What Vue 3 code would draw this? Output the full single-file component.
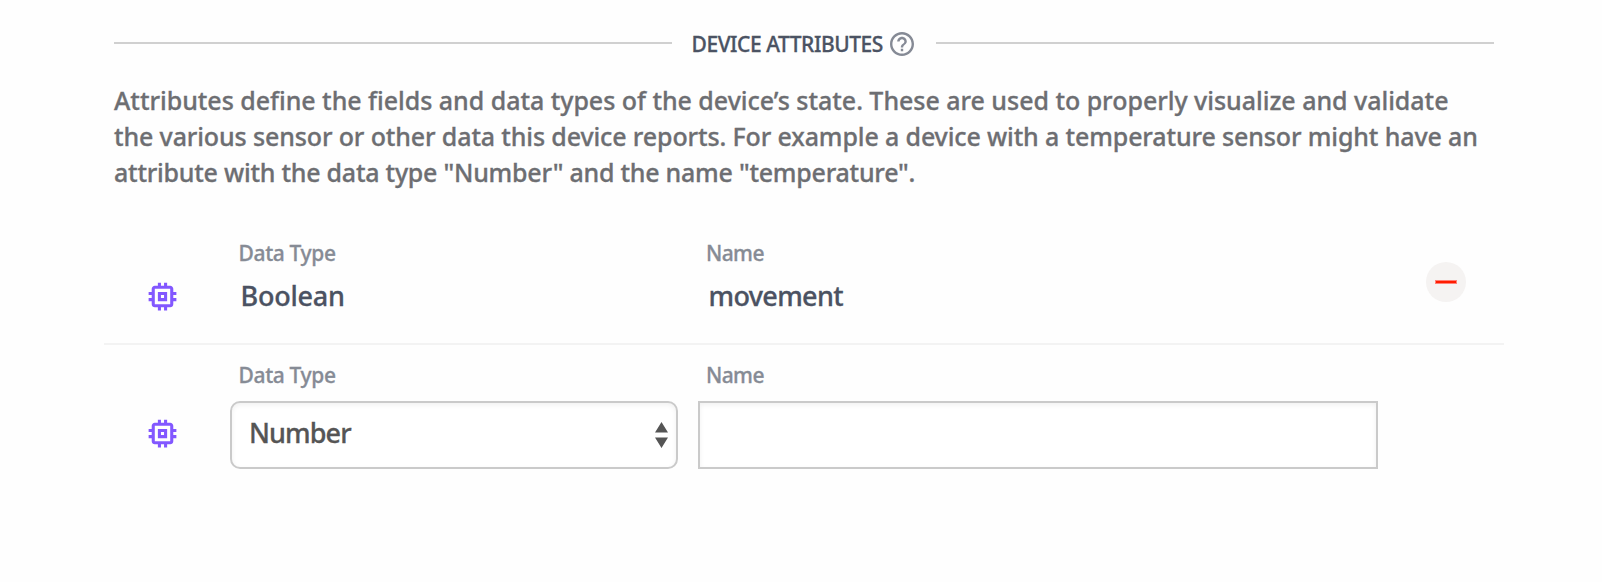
<script setup>
import { ref } from 'vue'

const attributes = [{ type: 'Boolean', name: 'movement' }]
const draftType = ref('Number')
const draftName = ref('')
const chip =
  'M15 9H9v6h6V9zm-2 4h-2v-2h2v2zm8-2V9h-2V7c0-1.1-.9-2-2-2h-2V3h-2v2h-2V3H9v2H7c-1.1 0-2 .9-2 2v2H3v2h2v2H3v2h2v2c0 1.1.9 2 2 2h2v2h2v-2h2v2h2v-2h2c1.1 0 2-.9 2-2v-2h2v-2h-2v-2h2zm-4 6H7V7h10v10z'
</script>

<template>
  <main class="page">
    <header class="heading">
      <span class="rule"></span>
      <h2 class="title">DEVICE ATTRIBUTES</h2>
      <svg class="help" viewBox="2 2 20 20">
        <path
          d="M11 18h2v-2h-2v2zm1-16C6.48 2 2 6.48 2 12s4.480 10 10 10 10-4.480 10-10S17.520 2 12 2zm0 18c-4.410 0-8-3.590-8-8s3.590-8 8-8 8 3.590 8 8-3.590 8-8 8zm0-14c-2.210 0-4 1.790-4 4h2c0-1.100.9-2 2-2s2 .9 2 2c0 2-3 1.750-3 5h2c0-2.250 3-2.500 3-5 0-2.210-1.790-4-4-4z"
        />
      </svg>
      <span class="rule"></span>
    </header>

    <p class="intro">
      <span class="line l1">Attributes define the fields and data types of the device’s state. These are used to properly visualize and validate</span>
      <span class="line l2">the various sensor or other data this device reports. For example a device with a temperature sensor might have an</span>
      <span class="line l3">attribute with the data type "Number" and the name "temperature".</span>
    </p>

    <section v-for="a in attributes" :key="a.name" class="row saved">
      <svg class="chip" viewBox="0 0 24 24"><path :d="chip" /></svg>
      <div class="col type">
        <span class="label"><span class="dt">Data Type</span></span>
        <span class="value"><span class="bool">{{ a.type }}</span></span>
      </div>
      <div class="col name">
        <span class="label"><span class="nm">Name</span></span>
        <span class="value"><span class="move">{{ a.name }}</span></span>
      </div>
      <button class="remove" aria-label="Remove"><i></i></button>
    </section>

    <section class="row draft">
      <svg class="chip" viewBox="0 0 24 24"><path :d="chip" /></svg>
      <div class="col type">
        <span class="label"><span class="dt">Data Type</span></span>
        <div class="select">
          <span class="num">{{ draftType }}</span>
          <svg class="arrows" viewBox="0 0 13 26">
            <path d="M6.500 0L13 10.500H0zM0 15.500h13L6.500 26z" />
          </svg>
        </div>
      </div>
      <div class="col name">
        <span class="label"><span class="nm">Name</span></span>
        <input v-model="draftName" class="input" type="text" aria-label="Name" />
      </div>
    </section>
  </main>
</template>

<style>
body {
  background: #fefefe;
}
</style>

<style scoped>
.page {
  box-sizing: border-box;
  width: 1602px;
  height: 582px;
  padding: 30px 98px 0 104px;
  overflow: hidden;
  font-family: "Noto Sans", "Open Sans", sans-serif;
  font-weight: 500;
  -webkit-text-stroke-width: 0.3px;
  background: #fefefe;
}
.heading {
  display: flex;
  align-items: center;
  width: 1380px;
  height: 26px;
  margin-left: 10px;
}
.rule {
  flex: 1;
  height: 2px;
  background: #d0d0d0;
}
.title {
  width: 190.500px;
  margin: 2px 8px 0 19.500px;
  font-size: 21px;
  font-weight: 500;
  line-height: 26px;
  letter-spacing: -0.46px;
  white-space: nowrap;
  color: #4b5363;
}
.help {
  width: 24px;
  height: 24px;
  margin: 2px 22px 0 0;
  fill: #858a95;
}
.intro {
  margin: 26px 0 0 10px;
  font-size: 25px;
  line-height: 36px;
  color: #6d6e72;
}
.line {
  display: block;
  white-space: nowrap;
}
.l1 {
  letter-spacing: -0.03px;
}
.l2 {
  letter-spacing: -0.13px;
}
.l3 {
  letter-spacing: -0.24px;
}
.row {
  display: flex;
  width: 1400px;
  box-sizing: border-box;
}
.saved {
  height: 107px;
  margin-top: 48px;
  border-bottom: 2px solid #f3f3f3;
}
.chip {
  width: 37px;
  height: 37px;
  margin: 40px 0 0 39.500px;
  fill: #8257ff;
}
.draft .chip {
  margin-top: 69.500px;
}
.col {
  display: flex;
  flex-direction: column;
}
.type {
  width: 448px;
  margin-left: 49.500px;
}
.name {
  width: 680px;
  margin-left: 20px;
}
.label {
  height: 28px;
  padding-left: 8px;
  font-size: 21px;
  line-height: 30px;
  color: #868b95;
}
.dt {
  margin-left: 0.500px;
  letter-spacing: -0.36px;
}
.nm {
  letter-spacing: -0.6px;
}
.draft .label {
  margin-top: 15px;
}
.value {
  margin-top: 10px;
  padding-left: 10.500px;
  font-size: 27px;
  line-height: 40px;
  color: #4b5262;
}
.bool {
  letter-spacing: -0.25px;
}
.move {
  letter-spacing: -0.65px;
}
.num {
  margin-top: -4px;
  letter-spacing: -0.9px;
}
.remove {
  display: grid;
  place-items: center;
  width: 40px;
  height: 40px;
  margin: 24px 0 0 47.500px;
  padding: 0;
  border: 0;
  border-radius: 50%;
  background: #f5f3f2;
}
.remove i {
  box-sizing: border-box;
  width: 22px;
  height: 4px;
  border: 1px solid #ff8178;
  background: #ff1c00;
}
.select,
.input {
  box-sizing: border-box;
  width: 100%;
  height: 68px;
  margin: 13px 0 0;
  border: 2px solid #cacaca;
  background: #fff;
  box-shadow: inset 0 2px 5px rgba(0, 0, 0, 0.06);
  outline: 0;
}
.select {
  display: flex;
  align-items: center;
  justify-content: space-between;
  padding: 0 8px 0 17px;
  border-radius: 10px;
  font-size: 27px;
  line-height: 40px;
  color: #555;
}
.arrows {
  width: 13px;
  height: 26px;
  fill: #555;
}
</style>
